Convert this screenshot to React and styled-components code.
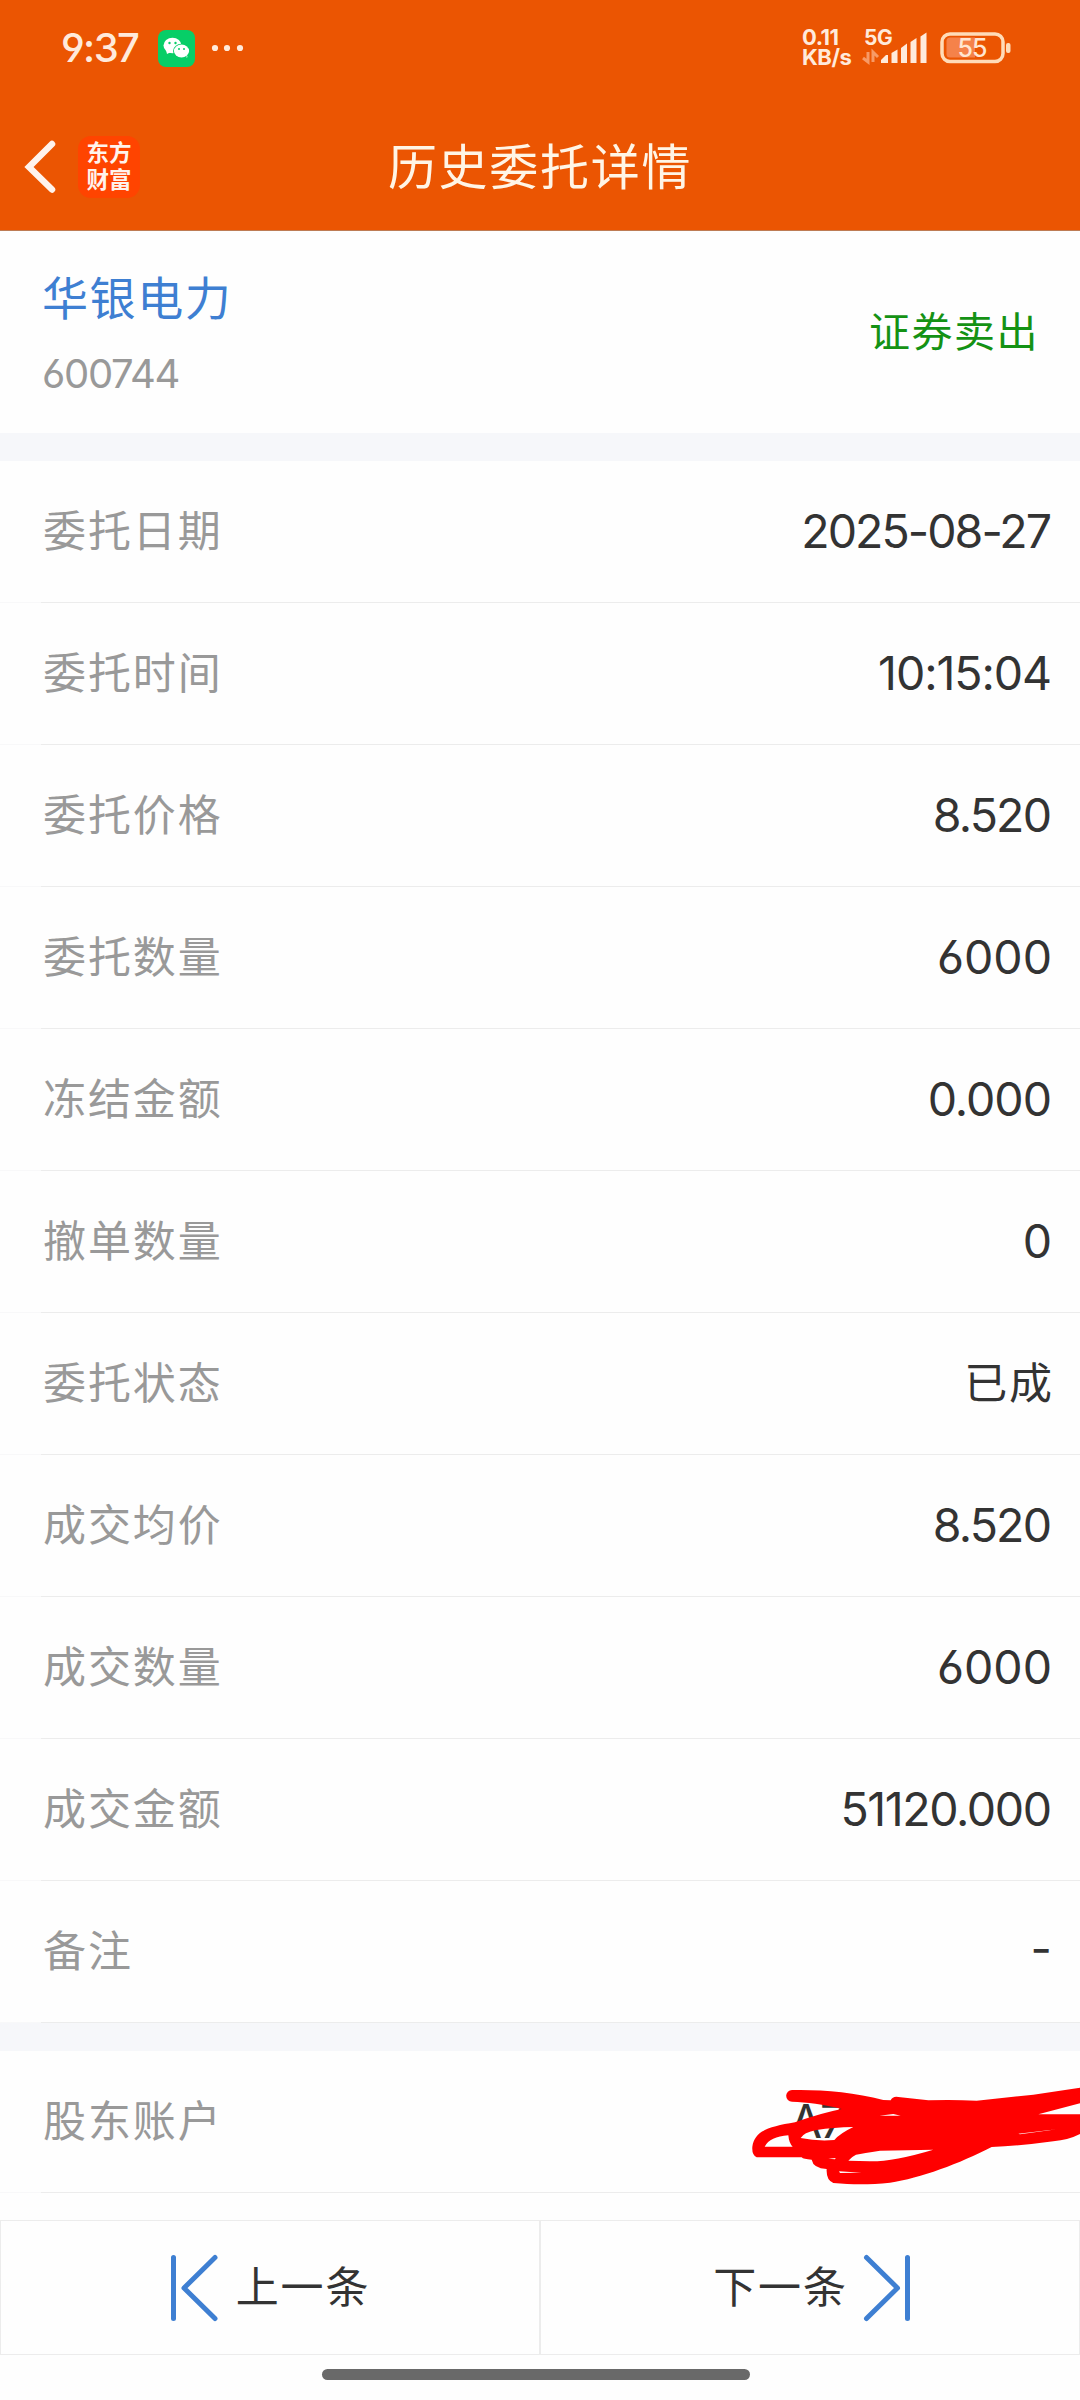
import React from 'react'
import styled, { createGlobalStyle } from 'styled-components'

const GlobalStyle = createGlobalStyle`
  * {
    box-sizing: border-box;
  }
  body {
    margin: 0;
    background: #fefefe;
    font-family: Inter, 'Noto Sans CJK SC', sans-serif;
    font-feature-settings: 'cv03', 'cv04';
    -webkit-font-smoothing: antialiased;
  }
`
const Page = styled.div`
  width: 1080px;
  height: 2400px;
  overflow: hidden;
  display: flex;
  flex-direction: column;
`
const Header = styled.header`
  height: 231px;
  flex: none;
  background: #eb5502;
  border-bottom: 1px solid #bd7c55;
`
const StatusBar = styled.div`
  height: 96px;
  display: flex;
  align-items: center;
  padding: 0 69px 0 61px;
  color: #ffeadb;

  svg {
    flex: none;
  }
`
const Clock = styled.span`
  width: 97px;
  font-size: 40px;
  font-weight: 500;
  line-height: 40px;
  letter-spacing: -1.6px;
  white-space: nowrap;
`
const Speed = styled.div`
  margin-left: auto;
  width: 60px;
  padding-bottom: 2px;
  font-size: 22px;
  font-weight: 700;
  line-height: 20.5px;
  letter-spacing: -0.5px;
  white-space: nowrap;
`
const Signal = styled.svg`
  margin-right: 13px;
`
const NavBar = styled.div`
  height: 134px;
  display: grid;
  grid-template-columns: 330px 1fr 330px;
  padding-top: 4px;
`
const NavLeft = styled.div`
  display: flex;
  align-items: center;
  gap: 20px;
  height: 134px;
  padding-left: 22px;
`
const AppLogo = styled.div`
  width: 62px;
  height: 62px;
  border-radius: 13px;
  background: #ff4400;
  color: #fff3ec;
  font-family: 'Noto Sans CJK SC', sans-serif;
  font-size: 22.5px;
  font-weight: 700;
  line-height: 27px;
  text-align: center;
  padding-top: 2px;
`
const Title = styled.h1`
  margin: 0;
  font-size: 49px;
  font-weight: 400;
  line-height: 136px;
  letter-spacing: 1.7px;
  color: #fff5e6;
  text-align: center;
  white-space: nowrap;
`
const Stock = styled.section`
  height: 202px;
  flex: none;
  display: flex;
  align-items: center;
  justify-content: space-between;
  padding: 2px 41px 0 42px;
`
const StockName = styled.div`
  font-size: 46px;
  line-height: 66px;
  letter-spacing: 1.6px;
  color: #3e7fd2;
`
const StockCode = styled.div`
  margin-top: 15px;
  font-size: 40px;
  line-height: 56px;
  letter-spacing: -1.3px;
  color: #999;
`
const Side = styled.div`
  padding-bottom: 8px;
  font-size: 41px;
  letter-spacing: 1.5px;
  color: #149214;
`
const Band = styled.div`
  height: 28px;
  flex: none;
  background: #f6f7fa;
`
const Row = styled.div`
  position: relative;
  height: 142px;
  flex: none;
  display: flex;
  align-items: center;
  justify-content: space-between;
  padding: 0 28px 0 43px;
  border-bottom: 1px solid;
  border-image: linear-gradient(to right, #f8f8f9 42px, #ececec 42px) 1;
`
const Label = styled.span`
  padding-bottom: 8px;
  font-size: 43px;
  letter-spacing: 1.9px;
  color: #999;
`
const Value = styled.span`
  padding-bottom: 1px;
  font-size: 46.5px;
  letter-spacing: ${props => props.$spacing || 0}px;
  margin-right: ${props => -(props.$spacing || 0)}px;
  color: #333;
`
const Status = styled(Label)`
  margin-right: -2px;
  color: #333;
`
const Remark = styled(Value)`
  padding-bottom: 7px;
`
const Account = styled(Value)`
  width: 260px;
`
const Scribble = styled.svg`
  position: absolute;
  right: 0;
  top: -31px;
`
const Pager = styled.nav`
  height: 135px;
  flex: none;
  display: grid;
  grid-template-columns: 540px 540px;
  margin-top: 27px;
`
const PagerButton = styled.button`
  display: flex;
  align-items: center;
  justify-content: center;
  gap: ${props => (props.$next ? 15 : 18)}px;
  padding: 0 0 0 ${props => (props.$next ? 4 : 0)}px;
  border: 1px solid #ececec;
  background: #fefefe;
  font-family: inherit;
  font-size: 43px;
  letter-spacing: 1.9px;
  color: #333;

  span {
    padding-bottom: 8px;
  }
`
const HomeBar = styled.div`
  width: 428px;
  height: 11px;
  flex: none;
  margin: 14px 0 0 322px;
  border-radius: 6px;
  background: #696969;
`

const orderRows = [
  { label: '委托日期', value: '2025-08-27', spacing: -1.95 },
  { label: '委托时间', value: '10:15:04', spacing: -1.1 },
  { label: '委托价格', value: '8.520', spacing: -1.8 },
  { label: '委托数量', value: '6000' },
  { label: '冻结金额', value: '0.000', spacing: -1 },
  { label: '撤单数量', value: '0' },
  { label: '委托状态', value: '已成', as: Status },
  { label: '成交均价', value: '8.520', spacing: -1.8 },
  { label: '成交数量', value: '6000' },
  { label: '成交金额', value: '51120.000', spacing: -1.4 },
  { label: '备注', value: '-', as: Remark },
]

function WeChatIcon() {
  return (
    <svg width="37" height="37" viewBox="0 0 37 37">
      <rect width="37" height="37" rx="8" fill="#07ce67" />
      <path d="M8 20 L9 24 L13 22Z M27 25 L29 28 L30 24Z" fill="#fff" />
      <ellipse cx="14.5" cy="15.5" rx="9" ry="7.7" fill="#fff" />
      <ellipse cx="23.5" cy="21" rx="8.5" ry="7.2" fill="#07ce67" />
      <ellipse cx="23.5" cy="21" rx="7.6" ry="6.4" fill="#fff" />
      <g fill="#07ce67">
        <circle cx="11.5" cy="13" r="1.2" />
        <circle cx="17.5" cy="13" r="1.2" />
        <circle cx="21" cy="19" r="1" />
        <circle cx="26" cy="19" r="1" />
      </g>
    </svg>
  )
}

function Dots() {
  return (
    <svg width="52" height="10" viewBox="0 0 52 10" fill="#ffeadb">
      <circle cx="20" cy="5" r="3.1" />
      <circle cx="32" cy="5" r="3.1" />
      <circle cx="45" cy="5" r="3.1" />
    </svg>
  )
}

function SignalIcon() {
  return (
    <Signal width="65" height="54" viewBox="-2 -7 65 54" fill="#ffeadb">
      <text x="0" y="17" fontSize="21" fontWeight="700" letterSpacing="-0.5">5G</text>
      <path d="M4 24 V34 L-1 30 M9 34 V24 L14 29" stroke="#f79a66" strokeWidth="3" fill="none" />
      <path d="M17 32 L22 27 H24 V35 H17Z" />
      <path d="M27.500 25 L33.500 21.500 V35 H27.500Z" />
      <path d="M37 20 L43 15.500 V35 H37Z" />
      <path d="M46.500 14 L52.500 10 V35 H46.500Z" />
      <path d="M56.500 8.500 L62.500 4.500 V35 H56.500Z" />
    </Signal>
  )
}

function BatteryIcon() {
  return (
    <svg width="71" height="32" viewBox="0 0 71 32">
      <rect x="2" y="2" width="61" height="27.5" rx="8" fill="none" stroke="#ffdcb8" strokeWidth="3.5" />
      <path d="M10 5.5 H35 V25.5 H10 Q6.500 25.500 6.500 22 V9 Q6.500 5.500 10 5.500Z" fill="#f5824a" />
      <rect x="66" y="11" width="4.500" height="10" rx="2" fill="#ffdcb8" />
      <text x="32" y="25" textAnchor="middle" fontSize="25" fontWeight="500" letterSpacing="-1" fill="#ffe6d2">55</text>
    </svg>
  )
}

function StepIcon({ next }) {
  return (
    <svg width="48" height="70" viewBox="0 0 48 70" fill="none" stroke="#3e7fd2" strokeWidth="5" strokeLinecap="round" strokeLinejoin="round">
      {next ? <path d="M3.500 4.500 L34.500 35 L3.500 65.500 M44.500 4.500 V65.500" /> : <path d="M3.500 4.500 V65.500 M45 4.500 L14 35 L45 65.500" />}
    </svg>
  )
}

// hand-drawn marker over the account number
function Marker() {
  return (
    <Scribble width="360" height="200" viewBox="0 0 1080 600">
      <path
        fill="#ff0000"
        fillRule="evenodd"
        d="M216 210 C300 208 400 216 490 240 L512 241 Q518 228 535 231 L625 241 Q700 239 770 242 L940 224 L1080 203
          V250 L955 283 H1080 V342 Q1045 360 1000 364 Q900 378 815 381 C720 430 600 475 510 488 C450 494 400 494 340 489
          Q318 480 320 447 Q280 445 275 419 Q250 418 245 412 L110 412 Q95 405 97 380 C105 330 150 320 225 307
          Q300 280 365 267 C310 252 260 247 216 245 A17 17 0 0 1 216 210Z
          M134 380 Q150 350 205 346 Q207 370 218 380Z
          M242 354 Q250 338 290 330 Q340 322 400 321 Q360 340 343 360 Q290 364 242 354Z
          M408 404 Q430 400 480 392 L640 389 Q520 425 450 424 L385 422 Q395 410 408 404Z
          M325 416 L347 414 L345 418Z M357 454 L425 458 L360 459Z
          M478 287 L520 282 L542 287Z M895 341 L1010 328 L900 343Z"
      />
    </Scribble>
  )
}

export default function App() {
  return (
    <Page>
      <GlobalStyle />
      <Header>
        <StatusBar>
          <Clock>9:37</Clock>
          <WeChatIcon />
          <Dots />
          <Speed>
            0.11
            <br />
            KB/s
          </Speed>
          <SignalIcon />
          <BatteryIcon />
        </StatusBar>
        <NavBar>
          <NavLeft>
            <svg width="36" height="56" viewBox="0 0 36 56" fill="none" stroke="#fff3ec" strokeWidth="6.500" strokeLinecap="round">
              <path d="M30 5 L7 28 L30 50.500" />
            </svg>
            <AppLogo>
              东方
              <br />
              财富
            </AppLogo>
          </NavLeft>
          <Title>历史委托详情</Title>
        </NavBar>
      </Header>
      <Stock>
        <div>
          <StockName>华银电力</StockName>
          <StockCode>600744</StockCode>
        </div>
        <Side>证券卖出</Side>
      </Stock>
      <Band />
      {orderRows.map(row => {
        const Cell = row.as || Value
        return (
          <Row key={row.label}>
            <Label>{row.label}</Label>
            <Cell $spacing={row.spacing}>{row.value}</Cell>
          </Row>
        )
      })}
      <Band />
      <Row>
        <Label>股东账户</Label>
        <Account $spacing={-2}>A7</Account>
        <Marker />
      </Row>
      <Pager>
        <PagerButton>
          <StepIcon />
          <span>上一条</span>
        </PagerButton>
        <PagerButton $next>
          <span>下一条</span>
          <StepIcon next />
        </PagerButton>
      </Pager>
      <HomeBar />
    </Page>
  )
}
